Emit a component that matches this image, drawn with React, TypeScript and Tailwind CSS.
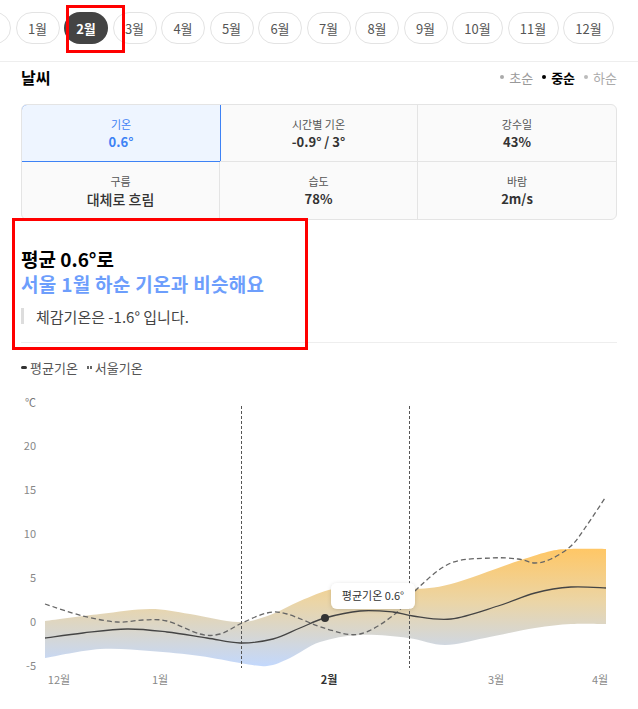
import React from 'react';

const MONTHS = ['', '1월', '2월', '3월', '4월', '5월', '6월', '7월', '8월', '9월', '10월', '11월', '12월'];

type Pt = [number, number];

// catmull-rom -> cubic bezier, gives the soft curves of the chart
function smooth(points: Pt[], moveTo = true): string {
  let d = moveTo ? `M${points[0][0]},${points[0][1]}` : `L${points[0][0]},${points[0][1]}`;
  for (let i = 0; i < points.length - 1; i++) {
    const p0 = points[i - 1] || points[i];
    const p1 = points[i];
    const p2 = points[i + 1];
    const p3 = points[i + 2] || p2;
    const c1x = p1[0] + (p2[0] - p0[0]) / 6;
    const c1y = p1[1] + (p2[1] - p0[1]) / 6;
    const c2x = p2[0] - (p3[0] - p1[0]) / 6;
    const c2y = p2[1] - (p3[1] - p1[1]) / 6;
    d += ` C${c1x.toFixed(1)},${c1y.toFixed(1)} ${c2x.toFixed(1)},${c2y.toFixed(1)} ${p2[0]},${p2[1]}`;
  }
  return d;
}

const UPPER: Pt[] = [
  [45, 620], [100, 613], [150, 608], [190, 613], [238, 621], [270, 614], [300, 600], [333, 588],
  [370, 586], [411, 588], [451, 583], [518, 560], [551, 550], [571, 548], [606, 548],
];
const LOWER: Pt[] = [
  [606, 623], [571, 623], [535, 627], [485, 637], [445, 644], [408, 637], [360, 634], [320, 641],
  [290, 657], [267, 665], [240, 662], [200, 655], [150, 650], [100, 648], [45, 657],
];
const MEAN: Pt[] = [
  [45, 637], [83, 632], [127, 628], [167, 631], [207, 637], [240, 642], [273, 638], [300, 627],
  [325, 617], [360, 610], [393, 611], [413, 615], [451, 618], [498, 605], [535, 592], [571, 586], [606, 587],
];
const SEOUL: Pt[] = [
  [45, 603], [83, 615], [117, 621], [143, 619], [167, 620], [200, 633], [220, 633], [242, 622],
  [267, 612], [287, 613], [327, 628], [360, 633], [395, 613], [418, 587], [451, 562], [491, 557],
  [518, 558], [535, 562], [551, 558], [571, 545], [585, 527], [605, 497],
];

function Chart() {
  const band = smooth(UPPER) + ' ' + smooth(LOWER, false) + ' Z';
  const yTicks: [string, number][] = [['20', 445], ['15', 489], ['10', 533], ['5', 577], ['0', 621], ['-5', 665]];
  const xTicks: [string, number, boolean][] = [['12월', 59, false], ['1월', 160, false], ['2월', 329, true], ['3월', 496, false], ['4월', 600, false]];

  return (
    <svg width="638" height="319" viewBox="0 390 638 319" className="block">
      <defs>
        <linearGradient id="band" x1="0" y1="548" x2="0" y2="665" gradientUnits="userSpaceOnUse">
          <stop offset="0" stopColor="#ffc766" />
          <stop offset="0.45" stopColor="#ebd5a6" />
          <stop offset="1" stopColor="#c3d8fc" />
        </linearGradient>
        <filter id="shadow" x="-20%" y="-40%" width="140%" height="180%">
          <feDropShadow dx="0" dy="1" stdDeviation="2" floodColor="#000" floodOpacity="0.15" />
        </filter>
      </defs>

      <text x="36" y="406" textAnchor="end" fontSize="11" fill="#777">℃</text>
      {yTicks.map(([t, y]) => (
        <text key={t} x="36" y={y + 4} textAnchor="end" fontSize="11" fill="#888">{t}</text>
      ))}

      <path d={band} fill="url(#band)" />

      <line x1="241.5" y1="405" x2="241.5" y2="667" stroke="#555" strokeDasharray="3 2" />
      <line x1="409.5" y1="405" x2="409.5" y2="667" stroke="#555" strokeDasharray="3 2" />

      <path d={smooth(SEOUL)} fill="none" stroke="#666" strokeWidth="1.3" strokeDasharray="5 3" />
      <path d={smooth(MEAN)} fill="none" stroke="#444" strokeWidth="1.3" />
      <circle cx="325" cy="617" r="4" fill="#333" />

      <g filter="url(#shadow)">
        <rect x="331" y="582" width="84" height="26" rx="6" fill="#fff" />
      </g>
      <text x="373" y="599" textAnchor="middle" fontSize="11" fill="#333">평균기온 0.6°</text>

      {xTicks.map(([t, x, bold]) => (
        <text key={t} x={x} y="683" textAnchor="middle" fontSize="11" fill={bold ? '#333' : '#888'} fontWeight={bold ? 700 : 400}>{t}</text>
      ))}
    </svg>
  );
}

const STATS = [
  { label: '기온', value: '0.6°', active: true },
  { label: '시간별 기온', value: '-0.9° / 3°' },
  { label: '강수일', value: '43%' },
  { label: '구름', value: '대체로 흐림', big: true },
  { label: '습도', value: '78%' },
  { label: '바람', value: '2m/s' },
];

export default function App() {
  return (
    <div className="relative w-[638px] h-[709px] overflow-hidden bg-white text-[#333] font-['Noto_Sans_CJK_KR',sans-serif]">
      {/* Month pills */}
      <div className="h-[62px] border-b border-[#eee] overflow-hidden">
        <div className="flex gap-[4.5px] pt-[12px] -ml-[33px]">
          {MONTHS.map((m, i) => (
            <div
              key={i}
              className={`shrink-0 h-[32px] rounded-full flex items-center justify-center text-[13px] leading-none ${
                m.length > 2 ? 'w-[51px]' : 'w-[44px]'
              } ${i === 2 ? 'bg-[#444] text-white font-bold' : 'border border-[#e3e3e3] text-[#555]'}`}
            >
              {m}
            </div>
          ))}
        </div>
      </div>

      <div className="px-[21px]">
        {/* Weather header */}
        <div className="flex items-center justify-between h-[28px] mt-[1px]">
          <h2 className="text-[16px] font-bold text-black leading-none">날씨</h2>
          <div className="flex items-center gap-[9px] text-[13px] leading-none">
            <span className="flex items-center gap-[5px] text-[#999]">
              <span className="w-[4px] h-[4px] rounded-full bg-[#aaa]" />초순
            </span>
            <span className="flex items-center gap-[5px] font-bold text-black">
              <span className="w-[4px] h-[4px] rounded-full bg-black" />중순
            </span>
            <span className="flex items-center gap-[5px] text-[#aaa]">
              <span className="w-[4px] h-[4px] rounded-full bg-[#bbb]" />하순
            </span>
          </div>
        </div>

        {/* Stats grid */}
        <div className="mt-[13px] grid grid-cols-3 border border-[#e4e4e4] rounded-md bg-[#fafafa] overflow-hidden">
          {STATS.map((s, i) => (
            <div
              key={s.label}
              className={`h-[57px] flex flex-col items-center justify-center gap-[5px] ${
                s.active
                  ? 'bg-[#eef5ff] border border-[#3d82f5] rounded-tl-md -m-px h-[58px]'
                  : `${i % 3 !== 2 ? 'border-r' : ''} ${i < 3 ? 'border-b' : ''} border-[#e4e4e4]`
              }`}
            >
              <span className={`text-[11px] leading-none ${s.active ? 'text-[#3d82f5]' : 'text-[#555]'}`}>{s.label}</span>
              <span
                className={`leading-none ${s.big ? 'text-[14px] font-medium' : 'text-[13px] font-bold'} ${
                  s.active ? 'text-[#3d82f5]' : 'text-[#333]'
                }`}
              >
                {s.value}
              </span>
            </div>
          ))}
        </div>

        {/* Summary */}
        <div className="pt-[26px] pb-[18px] border-b border-[#eee]">
          <p className="text-[19px] font-bold text-black leading-[25px]">평균 0.6°로</p>
          <p className="text-[19px] font-bold text-[#6d9efc] leading-[25px] tracking-[0.3px]">서울 1월 하순 기온과 비슷해요</p>
          <div className="mt-[12px] flex items-center gap-[12px]">
            <span className="w-[3px] h-[16px] bg-[#ddd]" />
            <span className="text-[15px] text-[#444] leading-none">체감기온은 -1.6° 입니다.</span>
          </div>
        </div>

        {/* Legend */}
        <div className="flex items-center gap-[9px] h-[48px] text-[13px] text-[#555] leading-none">
          <span className="flex items-center gap-[3px]">
            <span className="w-[6px] h-[3px] bg-[#333] rounded-sm" />평균기온
          </span>
          <span className="flex items-center gap-[3px]">
            <span className="flex gap-[1px]">
              <span className="w-[2px] h-[3px] bg-[#666]" />
              <span className="w-[2px] h-[3px] bg-[#666]" />
            </span>
            서울기온
          </span>
        </div>
      </div>

      <Chart />

      {/* annotation boxes */}
      <div className="absolute left-[66px] top-[5px] w-[59px] h-[48px] border-[3px] border-[#ff0000]" />
      <div className="absolute left-[12px] top-[218px] w-[296px] h-[132px] border-[3px] border-[#ff0000]" />
    </div>
  );
}
